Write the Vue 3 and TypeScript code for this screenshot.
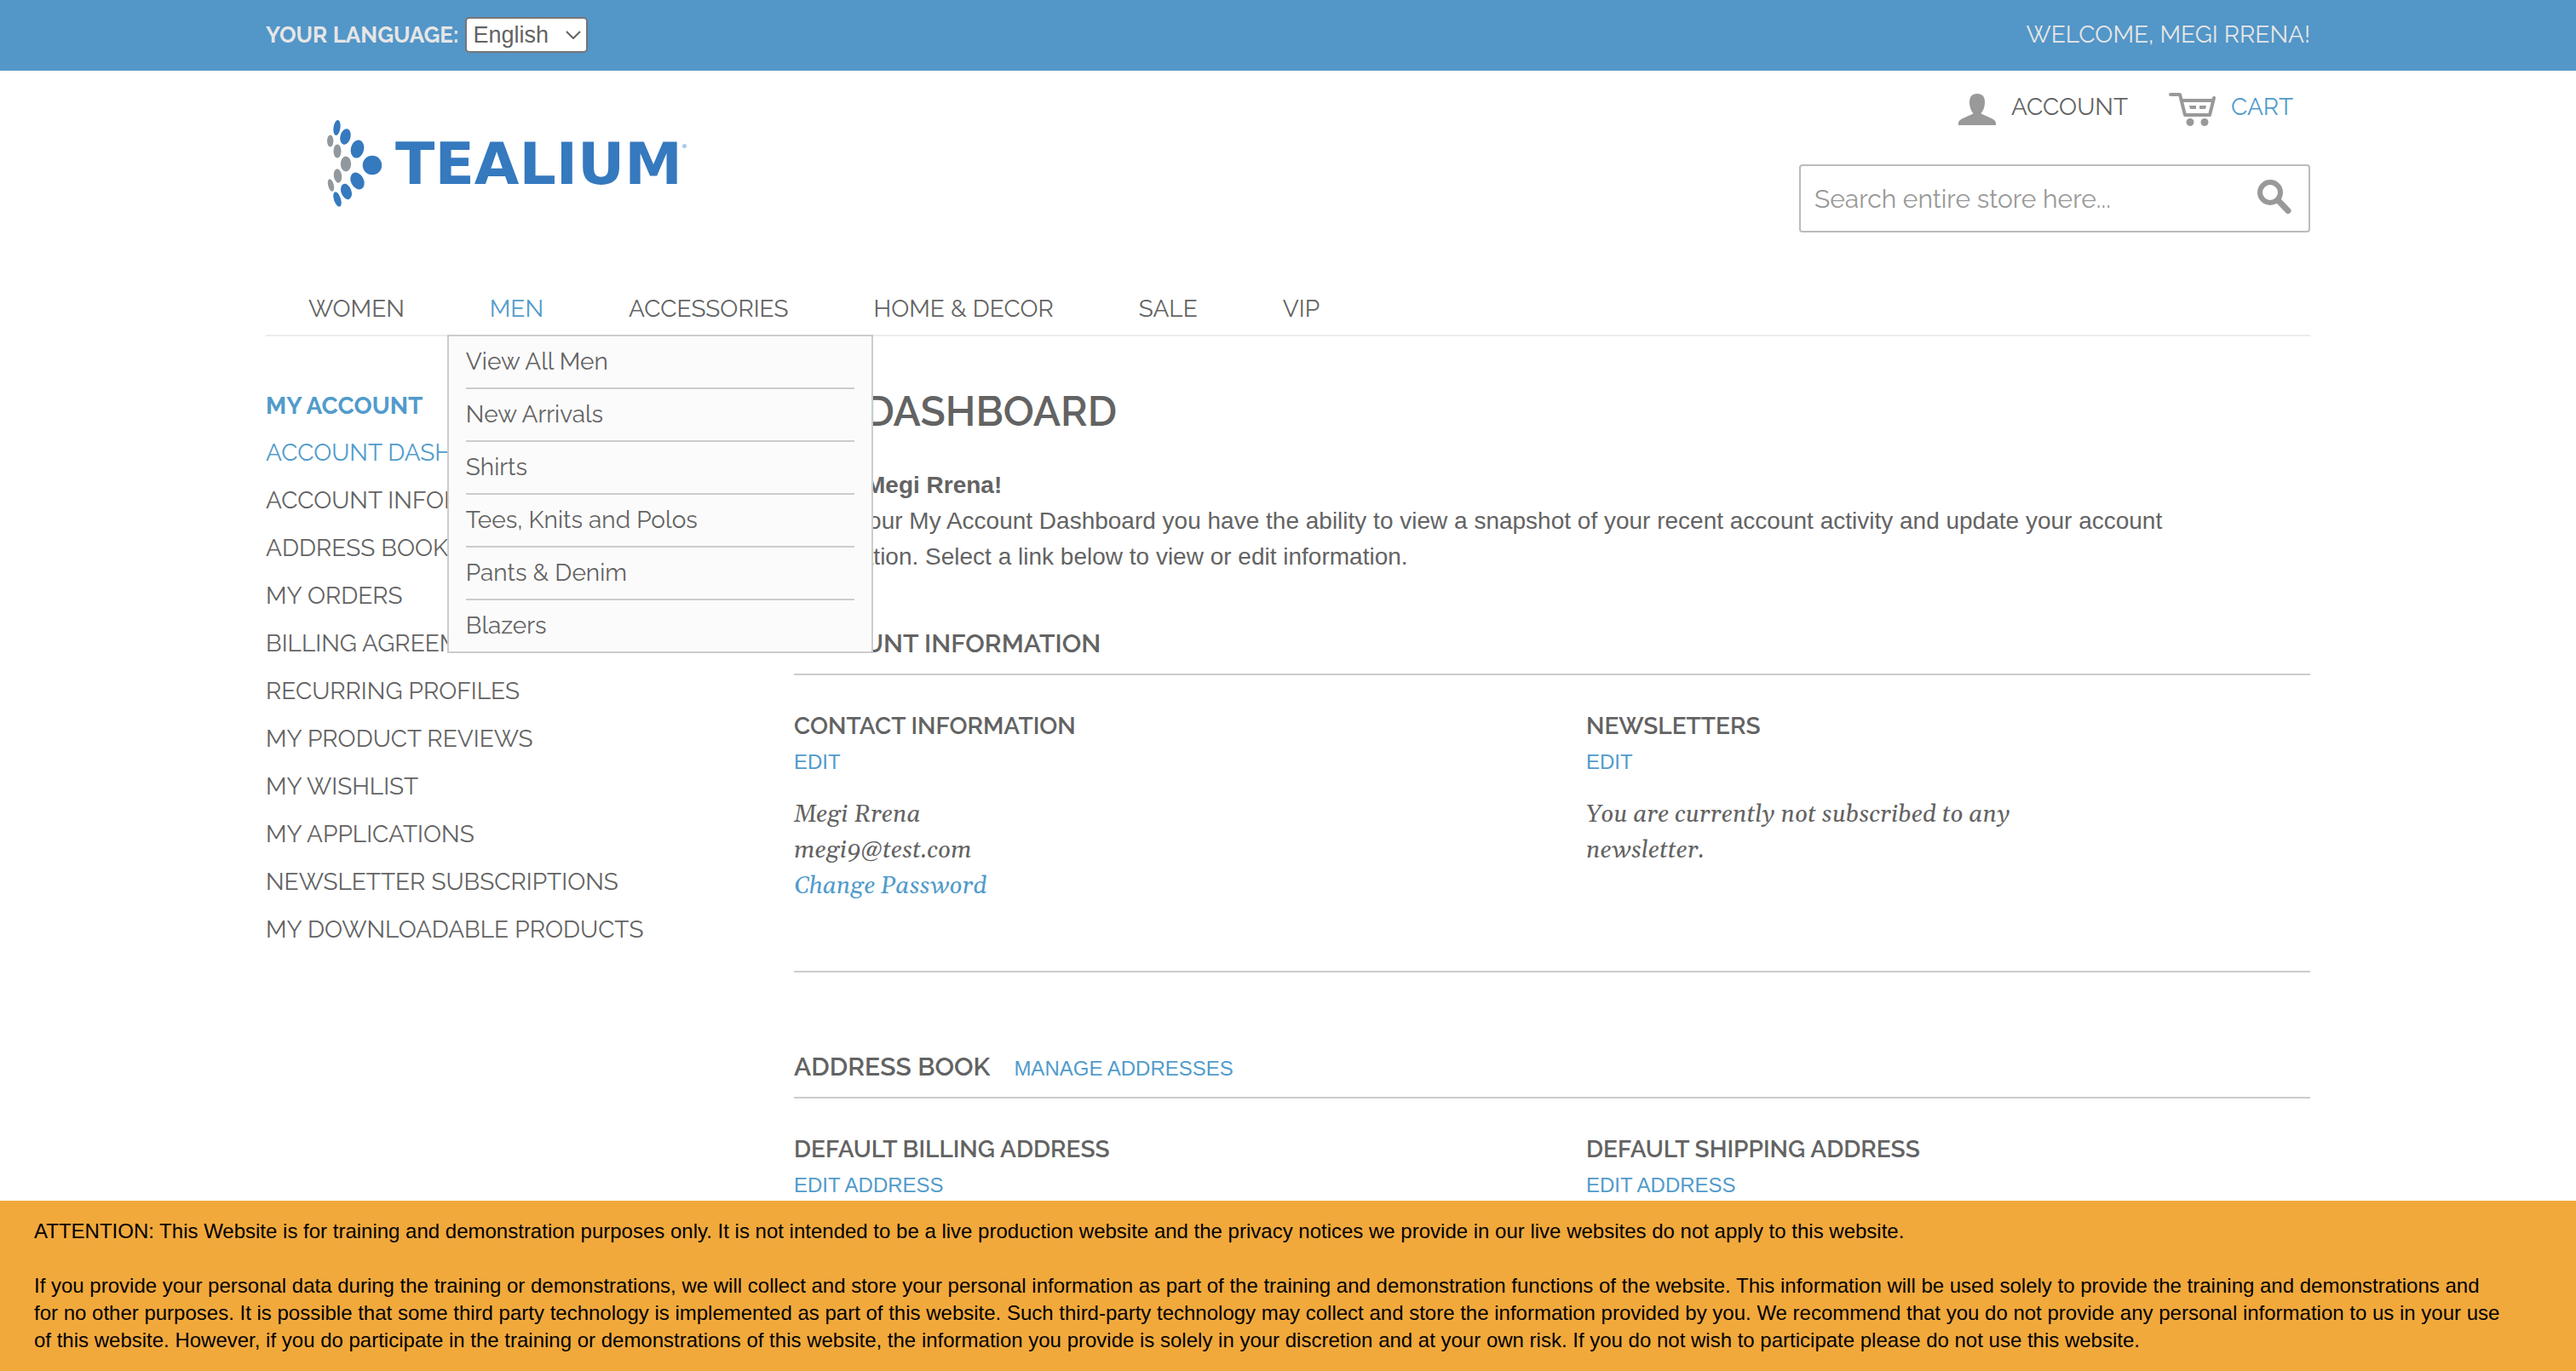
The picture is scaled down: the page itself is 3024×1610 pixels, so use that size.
<script setup lang="ts">
import { ref } from 'vue'

interface NavItem {
  label: string
  children?: string[]
}

const language = ref('English')
const query = ref('')

const nav: NavItem[] = [
  { label: 'Women' },
  {
    label: 'Men',
    children: ['View All Men', 'New Arrivals', 'Shirts', 'Tees, Knits and Polos', 'Pants & Denim', 'Blazers'],
  },
  { label: 'Accessories' },
  { label: 'Home & Decor' },
  { label: 'Sale' },
  { label: 'VIP' },
]
const openItem = ref('Men')

const accountLinks: string[] = [
  'Account Dashboard',
  'Account Information',
  'Address Book',
  'My Orders',
  'Billing Agreements',
  'Recurring Profiles',
  'My Product Reviews',
  'My Wishlist',
  'My Applications',
  'Newsletter Subscriptions',
  'My Downloadable Products',
]
const currentLink = 'Account Dashboard'
</script>

<template>
  <div class="page">
    <div class="topbar">
      <div class="container topbar-row">
        <div class="language">
          <label for="language">Your Language:</label>
          <span class="select-wrap">
            <select id="language" v-model="language">
              <option>English</option>
              <option>French</option>
              <option>German</option>
            </select>
            <svg class="chevron" viewBox="0 0 18 10" aria-hidden="true">
              <path d="M1 1l8 8 8-8" fill="none" stroke="#636363" stroke-width="2" />
            </svg>
          </span>
        </div>
        <p class="welcome">Welcome, Megi Rrena!</p>
      </div>
    </div>

    <div class="container">
      <header class="header">
        <a class="logo" href="#">
          <svg class="logo-mark" viewBox="0 0 64 102" aria-hidden="true">
            <g fill="#3579be">
              <ellipse cx="11.500" cy="9" rx="4" ry="9" transform="rotate(8 11.500 9)" />
              <ellipse cx="21.500" cy="19.500" rx="6" ry="9.500" transform="rotate(14 21.500 19.500)" />
              <ellipse cx="35.500" cy="34" rx="7.700" ry="10.700" transform="rotate(14 35.500 34)" />
              <ellipse cx="53" cy="53" rx="11.300" ry="11.300" />
              <ellipse cx="35.500" cy="71.500" rx="7.500" ry="10.500" transform="rotate(-28 35.500 71.500)" />
              <ellipse cx="22.500" cy="84" rx="6" ry="9.500" transform="rotate(-20 22.500 84)" />
              <ellipse cx="12" cy="93" rx="4" ry="9" transform="rotate(-18 12 93)" />
            </g>
            <g fill="#92999e">
              <ellipse cx="3.700" cy="24.500" rx="3.700" ry="7" />
              <ellipse cx="12" cy="36.500" rx="4.500" ry="8" />
              <ellipse cx="22" cy="51.500" rx="6.200" ry="8.900" />
              <ellipse cx="12.500" cy="65.500" rx="4.700" ry="8.200" transform="rotate(-8 12.500 65.500)" />
              <ellipse cx="4.500" cy="76.500" rx="3.300" ry="7.500" transform="rotate(-14 4.500 76.500)" />
            </g>
          </svg>
          <span class="logo-word">TEALIUM</span>
          <span class="logo-dot" aria-hidden="true"></span>
        </a>

        <div class="header-side">
          <div class="header-links">
            <a class="header-link" href="#">
              <svg class="icon-person" viewBox="0 0 44 37" aria-hidden="true">
                <path
                  fill="#999"
                  d="M22 0c6 0 9 3.500 9 10 0 5.500-2 10.500-4.500 13 1 1.500 4 2 8 4 5.500 2.500 9.500 4 9.500 8v2H0v-2c0-4 4-5.500 9.500-8 4-2 7-2.500 8-4C15 20.500 13 15.500 13 10c0-6.500 3-10 9-10z"
                />
              </svg>
              <span>Account</span>
            </a>
            <a class="header-link is-active" href="#">
              <svg class="icon-cart" viewBox="0 0 55 39" aria-hidden="true">
                <path
                  d="M2 2h11l6 24h29l5-20M15 9h37"
                  fill="none"
                  stroke="#999"
                  stroke-width="4"
                  stroke-linecap="round"
                  stroke-linejoin="round"
                />
                <path d="M24 15h8v4h-7zM36 15h8l-1 4h-7z" fill="#999" />
                <circle cx="25" cy="34.500" r="4.500" fill="#999" />
                <circle cx="42" cy="34.500" r="4.500" fill="#999" />
              </svg>
              <span>Cart</span>
            </a>
          </div>
          <form class="search" role="search" @submit.prevent>
            <input v-model="query" type="search" aria-label="Search" placeholder="Search entire store here..." />
            <button type="submit" aria-label="Search">
              <svg viewBox="0 0 40 40" aria-hidden="true">
                <circle cx="15" cy="15" r="12" fill="none" stroke="#999" stroke-width="6" />
                <path d="M24 24l12 12.500" stroke="#999" stroke-width="7" stroke-linecap="round" />
              </svg>
            </button>
          </form>
        </div>
      </header>

      <nav class="nav" aria-label="Categories">
        <ul class="nav-list">
          <li v-for="item in nav" :key="item.label" class="nav-item">
            <a href="#" :class="{ 'is-active': item.label === openItem }">{{ item.label }}</a>
            <ul v-if="item.children && item.label === openItem" class="dropdown">
              <li v-for="child in item.children" :key="child">
                <a href="#">{{ child }}</a>
              </li>
            </ul>
          </li>
        </ul>
      </nav>

      <div class="columns">
        <aside class="sidebar">
          <h2>My Account</h2>
          <ul>
            <li v-for="link in accountLinks" :key="link">
              <a href="#" :class="{ 'is-active': link === currentLink }">{{ link }}</a>
            </li>
          </ul>
        </aside>

        <main class="main">
          <h1>My Dashboard</h1>
          <div class="intro">
            <p><strong>Hello, Megi Rrena!</strong></p>
            <p>
              From your My Account Dashboard you have the ability to view a snapshot of your recent account activity
              and update your account information. Select a link below to view or edit information.
            </p>
          </div>

          <section class="section">
            <div class="section-head">
              <h2>Account Information</h2>
            </div>
            <div class="boxes ruled">
              <div class="box">
                <h3>Contact Information</h3>
                <a class="action" href="#">Edit</a>
                <p class="details">
                  Megi Rrena<br />
                  megi9@test.com<br />
                  <a href="#">Change Password</a>
                </p>
              </div>
              <div class="box">
                <h3>Newsletters</h3>
                <a class="action" href="#">Edit</a>
                <p class="details">You are currently not subscribed to any newsletter.</p>
              </div>
            </div>
          </section>

          <section class="section">
            <div class="section-head">
              <h2>Address Book</h2>
              <a class="action" href="#">Manage Addresses</a>
            </div>
            <div class="boxes">
              <div class="box">
                <h3>Default Billing Address</h3>
                <a class="action" href="#">Edit Address</a>
              </div>
              <div class="box">
                <h3>Default Shipping Address</h3>
                <a class="action" href="#">Edit Address</a>
              </div>
            </div>
          </section>
        </main>
      </div>
    </div>

    <div class="notice" role="note">
      <p>
        ATTENTION: This Website is for training and demonstration purposes only. It is not intended to be a live
        production website and the privacy notices we provide in our live websites do not apply to this website.
      </p>
      <p>
        If you provide your personal data during the training or demonstrations, we will collect and store your
        personal information as part of the training and demonstration functions of the website. This information will
        be used solely to provide the training and demonstrations and<br />
        for no other purposes. It is possible that some third party technology is implemented as part of this website.
        Such third-party technology may collect and store the information provided by you. We recommend that you do not
        provide any personal information to us in your use<br />
        of this website. However, if you do participate in the training or demonstrations of this website, the
        information you provide is solely in your discretion and at your own risk. If you do not wish to participate
        please do not use this website.
      </p>
    </div>
  </div>
</template>

<style>
body {
  margin: 0;
  background: #fff;
}
</style>

<style scoped>
.page {
  color: #636363;
  font-family: Raleway, Lato, sans-serif;
  font-size: 28px;
  line-height: 42px;
}
h1,
h2,
h3,
p,
ul {
  margin: 0;
  padding: 0;
}
ul {
  list-style: none;
}
a {
  color: inherit;
  text-decoration: none;
}
.is-active {
  color: #519bcb;
}
.container {
  max-width: 2400px;
  margin: 0 auto;
}

.topbar {
  background: #5396c8;
  color: #e6e6e6;
  text-transform: uppercase;
}
.topbar-row {
  display: flex;
  justify-content: space-between;
  align-items: center;
  height: 83px;
  padding-bottom: 2px;
  box-sizing: border-box;
}
.language {
  display: flex;
  align-items: center;
  gap: 8px;
  font-size: 26px;
  font-weight: 700;
}
.select-wrap {
  display: grid;
  align-items: center;
}
.select-wrap > * {
  grid-area: 1 / 1;
}
select {
  appearance: none;
  width: 144px;
  height: 42px;
  padding: 0 7px;
  border: 2px solid #767676;
  border-radius: 5px;
  background: #fff;
  color: #636363;
  font-family: 'Liberation Sans', Arial, sans-serif;
  font-size: 27px;
}
.chevron {
  justify-self: end;
  width: 18px;
  height: 10px;
  margin-right: 8px;
  pointer-events: none;
}

.header {
  display: flex;
  justify-content: space-between;
  align-items: flex-start;
  height: 256px;
}
.logo {
  display: flex;
  align-items: center;
  margin: 58px 0 0 72px;
}
.logo-mark {
  width: 64px;
  height: 102px;
  margin-right: 16px;
}
.logo-word {
  padding-top: 2px;
  color: #3579be;
  font-family: 'DejaVu Sans', Verdana, sans-serif;
  font-size: 68px;
  font-weight: 700;
  line-height: 80px;
}
.logo-dot {
  align-self: flex-start;
  width: 5px;
  height: 5px;
  margin-top: 28px;
  border-radius: 50%;
  background: #a9cbe6;
}
.header-side {
  width: 600px;
}
.header-links {
  display: flex;
  justify-content: flex-end;
  gap: 48px;
  padding: 20px 20px 0 0;
  text-transform: uppercase;
}
.header-link {
  display: flex;
  align-items: center;
  gap: 18px;
}
.header-link svg {
  margin-top: 6px;
}
.icon-person {
  width: 44px;
  height: 37px;
}
.icon-cart {
  width: 55px;
  height: 39px;
}
.search {
  display: flex;
  align-items: center;
  height: 80px;
  margin-top: 45px;
  border: 2px solid #bbb;
  border-radius: 4px;
  box-sizing: border-box;
}
.search input {
  flex: 1;
  min-width: 0;
  padding: 0 16px;
  border: 0;
  outline: 0;
  background: transparent;
  color: #636363;
  font-family: inherit;
  font-size: 30px;
}
.search input::placeholder {
  color: #999;
  opacity: 1;
}
.search button {
  display: flex;
  padding: 0 20px 4px;
  border: 0;
  background: none;
}
.search svg {
  width: 40px;
  height: 40px;
}

.nav {
  border-bottom: 2px solid #ededed;
}
.nav-list {
  display: flex;
}
.nav-item {
  position: relative;
  text-transform: uppercase;
}
.nav-item > a {
  display: block;
  height: 54px;
  padding: 0 50px;
  line-height: 48px;
}
.dropdown {
  position: absolute;
  z-index: 2;
  top: 100%;
  left: 0;
  width: 500px;
  padding: 0 20px;
  border: 2px solid #ccc;
  background: #fbfbfb;
  box-sizing: border-box;
  text-transform: none;
}
.dropdown li + li {
  border-top: 2px solid #ccc;
}
.dropdown a {
  display: block;
  line-height: 60px;
}

.columns {
  display: flex;
  padding-top: 60px;
}
.sidebar {
  width: 620px;
  flex: none;
  text-transform: uppercase;
}
.sidebar h2 {
  color: #519bcb;
  font-size: 28px;
  font-weight: 700;
  line-height: 44px;
  margin-bottom: 5px;
}
.sidebar li {
  line-height: 56px;
}
.main {
  flex: 1;
  min-width: 0;
}
h1 {
  font-size: 48px;
  font-weight: 600;
  line-height: 56px;
  text-transform: uppercase;
}
.intro {
  max-width: 1740px;
  margin-top: 38px;
  font-family: 'Liberation Sans', Arial, sans-serif;
}
.section-head {
  display: flex;
  align-items: baseline;
  gap: 28px;
  padding-bottom: 14px;
  border-bottom: 2px solid #ccc;
}
.section-head h2 {
  font-size: 30px;
  font-weight: 600;
  text-transform: uppercase;
}
.section {
  margin-top: 60px;
}
.section + .section {
  margin-top: 90px;
}
.boxes {
  display: grid;
  grid-template-columns: 1fr 1fr;
  column-gap: 80px;
  padding-top: 39px;
}
.boxes.ruled {
  padding-bottom: 78px;
  border-bottom: 2px solid #ccc;
}
.box {
  display: flex;
  flex-direction: column;
  align-items: flex-start;
}
.box h3 {
  font-size: 28px;
  font-weight: 600;
  text-transform: uppercase;
}
.action {
  color: #519bcb;
  font-family: 'Liberation Sans', Arial, sans-serif;
  font-size: 24px;
  text-transform: uppercase;
}
.section-head .action {
  line-height: 32px;
}
.details {
  max-width: 600px;
  margin-top: 20px;
  font-family: Georgia, Gelasio, 'Liberation Serif', serif;
  font-size: 28px;
  font-style: italic;
}
.boxes .details {
  max-width: 560px;
}
.details a {
  color: #519bcb;
}

.notice {
  position: fixed;
  z-index: 3;
  right: 0;
  bottom: 0;
  left: 0;
  padding: 20px 40px;
  background: #f1a93c;
  color: #000;
  font-family: 'Liberation Sans', Arial, sans-serif;
  font-size: 24px;
  line-height: 32px;
}
.notice p + p {
  margin-top: 32px;
}
</style>
